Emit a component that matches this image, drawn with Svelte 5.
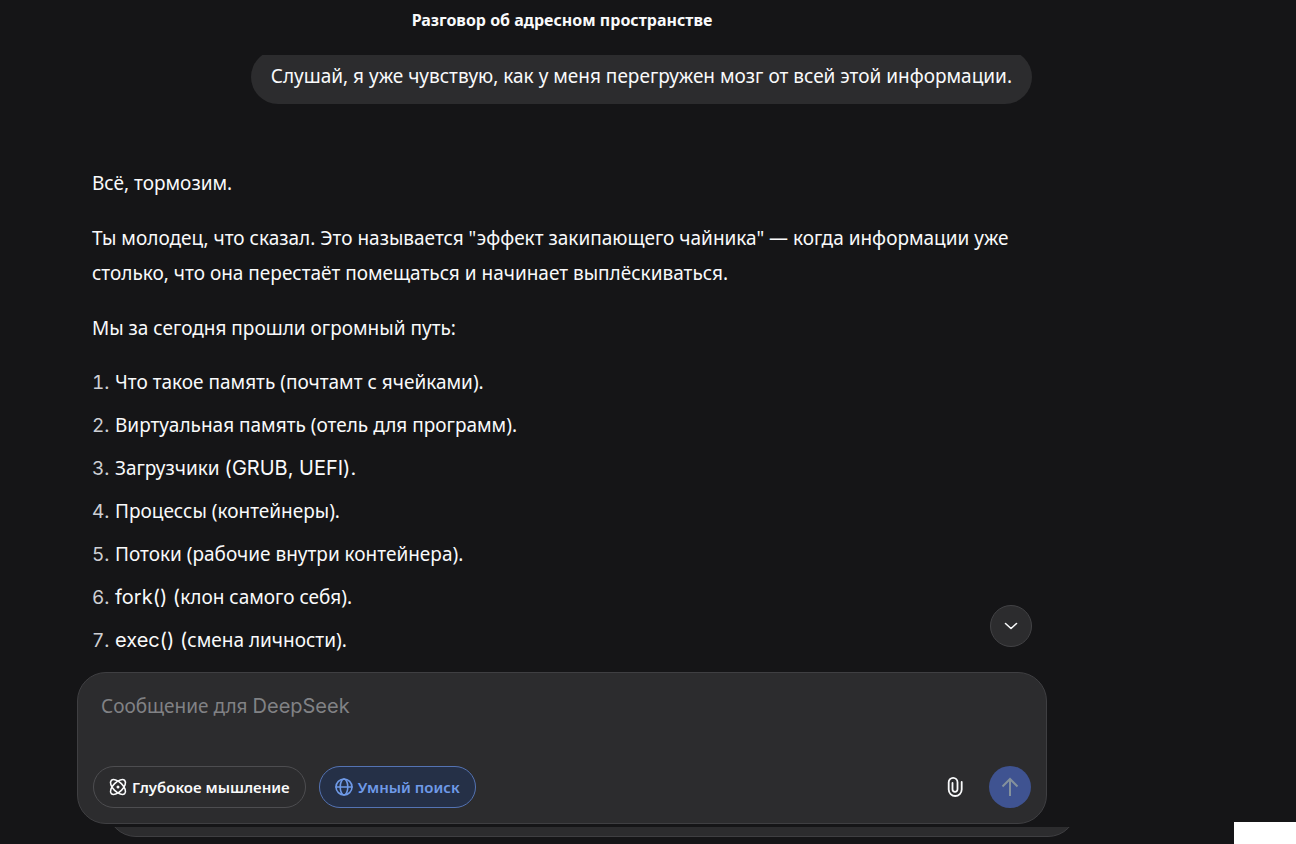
<script lang="ts">
	let draft = $state('');
	let deepThink = $state(false);
	let smartSearch = $state(true);

	// latin runs use Inter, everything else falls to the cyrillic family
	type Run = { text: string; latin?: boolean };
	const topics: Run[][] = [
		[{ text: 'Что такое память (почтамт с ячейками).' }],
		[{ text: 'Виртуальная память (отель для программ).' }],
		[{ text: 'Загрузчики ' }, { text: '(GRUB, UEFI).', latin: true }],
		[{ text: 'Процессы (контейнеры).' }],
		[{ text: 'Потоки (рабочие внутри контейнера).' }],
		[{ text: 'fork() (', latin: true }, { text: 'клон самого себя).' }],
		[{ text: 'exec() (', latin: true }, { text: 'смена личности).' }]
	];
</script>

<div class="page">
	<main>
		<header><h1>Разговор об адресном пространстве</h1></header>

		<section class="thread">
			<p class="bubble">Слушай, я уже чувствую, как у меня перегружен мозг от всей этой информации.</p>

			<div class="answer">
				<p>Всё, тормозим.</p>
				<p>Ты молодец, что сказал. Это называется "эффект закипающего чайника" — когда информации уже столько, что она перестаёт помещаться и начинает выплёскиваться.</p>
				<p>Мы за сегодня прошли огромный путь:</p>
				<ol>
					{#each topics as runs, i (i)}
						<li>{#each runs as run (run.text)}<span class:latin={run.latin}>{run.text}</span>{/each}</li>
					{/each}
				</ol>
			</div>

			<button class="scroll" aria-label="Вниз">
				<svg width="14" height="14" viewBox="0 0 14 14"><path d="M1.500 4.500 7 9.500l5.500-5" /></svg>
			</button>
		</section>

		<form class="composer" onsubmit={(e) => e.preventDefault()}>
			<div class="field">
				<textarea id="message" rows="1" aria-label="Сообщение для DeepSeek" bind:value={draft}></textarea>
				{#if !draft}
					<label class="hint" for="message">Сообщение для <span class="latin">DeepSeek</span></label>
				{/if}
			</div>
			<div class="tools">
				<button type="button" class="chip" class:active={deepThink} aria-pressed={deepThink} onclick={() => (deepThink = !deepThink)}>
					<svg width="18" height="18" viewBox="0 0 18 18">
						<ellipse cx="9" cy="9" rx="9.400" ry="4.800" transform="rotate(45 9 9)" />
						<ellipse cx="9" cy="9" rx="9.400" ry="4.800" transform="rotate(-45 9 9)" />
						<circle class="dot" cx="9" cy="9" r="1.500" />
					</svg>
					Глубокое мышление
				</button>
				<button type="button" class="chip" class:active={smartSearch} aria-pressed={smartSearch} onclick={() => (smartSearch = !smartSearch)}>
					<svg width="18" height="18" viewBox="0 0 18 18">
						<circle cx="9" cy="9" r="8" />
						<ellipse cx="9" cy="9" rx="3.800" ry="8" />
						<path d="M1 9h16" />
					</svg>
					Умный поиск
				</button>
				<button type="button" class="attach" aria-label="Прикрепить файл">
					<svg width="16" height="20" viewBox="0 0 16 20">
						<path d="M5.500 6v6.300a2.500 2.500 0 0 0 5 0V5.200a4.400 4.400 0 0 0-8.800 0v7.300a6.500 6.500 0 0 0 13 0V5" />
					</svg>
				</button>
				<button class="send" aria-label="Отправить">
					<svg width="18" height="20" viewBox="0 0 18 20"><path d="M9 19V2M1.500 9.500 9 2l7.500 7.500" /></svg>
				</button>
			</div>
		</form>
		<div class="under"></div>
	</main>
	<div class="corner"></div>
</div>

<style>
	:global(body) { background: #151517; }
	.page { position: relative; height: 100vh; overflow: hidden; color: #f9fafb; font: 19px/35px "Noto Sans", "Open Sans", sans-serif; }
	main { display: grid; grid-template-rows: 55px 1fr auto auto; justify-content: center; grid-template-columns: minmax(0, 970px); height: 100%; margin-right: 172px; box-sizing: border-box; padding-bottom: 7px; }
	h1 { margin: 0; text-align: center; font-size: 16px; line-height: 40px; font-weight: 700; }
	.latin { font-family: Inter, sans-serif; font-size: 20px; line-height: 24px; }

	.thread { position: relative; min-height: 0; overflow: hidden; padding: 0 15px; }
	.bubble { width: fit-content; margin: -5px 0 62px auto; padding: 9px 20px 10px; border-radius: 27px; background: #2c2c2e; }
	.answer p { margin: 0 0 20px; }
	ol { display: grid; gap: 8px; margin: -1px 0 0; padding: 0; list-style: none; counter-reset: topic; }
	li { counter-increment: topic; }
	li::before { content: counter(topic) "."; display: inline-block; width: 23px; color: #cdcfd4; font-family: Inter, sans-serif; font-variant-numeric: tabular-nums; }

	button { display: flex; align-items: center; justify-content: center; margin: 0; padding: 0; border: 0; background: none; color: inherit; font: inherit; cursor: pointer; }
	svg { flex: none; overflow: visible; fill: none; stroke: currentColor; stroke-width: 1.6; stroke-linecap: round; stroke-linejoin: round; }
	.scroll { position: absolute; right: 15px; bottom: 25px; width: 42px; height: 42px; box-sizing: border-box; border: 1px solid #424245; border-radius: 50%; background: #2c2c2e; }

	.composer { box-sizing: border-box; padding: 16px 15px 15px; border: 1px solid #3f3f42; border-radius: 29px; background: #2c2c2e; }
	.field { position: relative; height: 77px; }
	textarea { display: block; width: 100%; height: 100%; box-sizing: border-box; padding: 0 8px; border: 0; outline: 0; resize: none; background: none; color: inherit; font: inherit; }
	.hint { position: absolute; left: 8px; top: 0; color: #818285; cursor: text; }
	.tools { display: flex; align-items: center; }
	.chip { gap: 5px; height: 42px; box-sizing: border-box; margin-right: 13px; padding: 0 15px; border: 1px solid #4d4d50; border-radius: 21px; font-size: 15px; line-height: 24px; font-weight: 600; }
	.chip.active { border-color: #5473b3; background: #253047; color: #6f9ae8; }
	.dot { fill: currentColor; stroke: none; }
	.attach { width: 42px; height: 42px; margin-left: auto; }
	.attach svg { stroke-width: 1.8; }
	.send { width: 42px; height: 42px; margin-left: 13px; border-radius: 50%; background: #3f5391; color: #84919c; }
	.send svg { stroke-width: 2; stroke-linecap: butt; stroke-linejoin: miter; }

	/* lower lip of the panel behind the composer */
	.under { position: relative; height: 10px; margin: 3px -30px 0 30px; overflow: hidden; }
	.under::before { content: ""; position: absolute; inset: auto 0 0; height: 60px; box-sizing: border-box; border: 1px solid #3f3f42; border-radius: 29px; background: #2c2c2e; }
	.corner { position: absolute; right: 0; bottom: 0; width: 62px; height: 22px; background: #fff; }
</style>
